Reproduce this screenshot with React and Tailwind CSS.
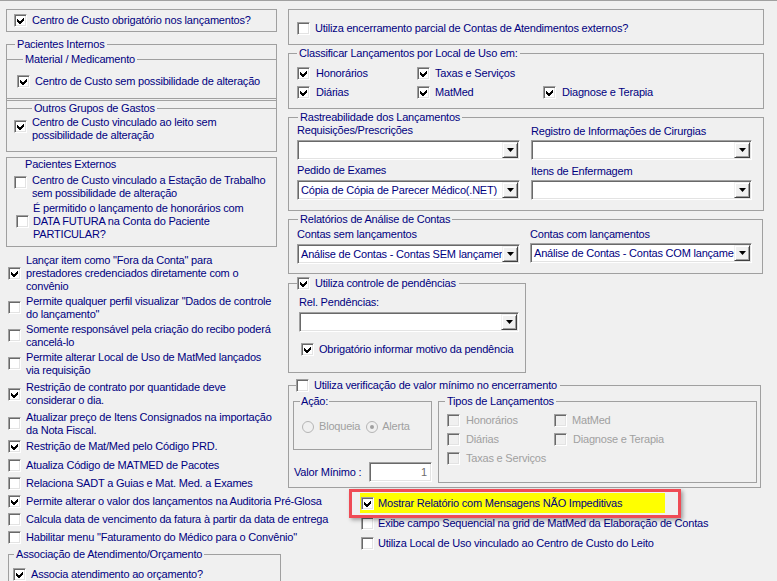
import React from 'react';

const T = 'text-[11px] leading-[13px] tracking-[-0.2px] whitespace-nowrap';
const NAVY = 'text-[#000080]';
const SUNKEN =
  'border border-t-[#a0a0a0] border-l-[#a0a0a0] border-b-white border-r-white shadow-[inset_1px_1px_0_#696969,inset_-1px_-1px_0_#e3e3e3]';

function Box({ checked, disabled }) {
  return (
    <span
      className={`flex items-center justify-center w-[13px] h-[13px] shrink-0 ${SUNKEN} ${
        disabled ? 'bg-[#f0f0f0]' : 'bg-white'
      }`}
    >
      {checked && (
        <svg width="7" height="7" viewBox="0 0 7 7" shapeRendering="crispEdges">
          <polygon points="0,2 2.5,4.5 7,0 7,3 2.5,7.5 0,5" fill={disabled ? '#a0a0a0' : '#000'} />
        </svg>
      )}
    </span>
  );
}

function Check({ checked, disabled, children, className = '', gap = 'gap-[5px]', align = 'items-center', box = '' }) {
  return (
    <div className={`flex shrink-0 ${align} ${gap} ${className}`}>
      <span className={box}>
        <Box checked={checked} disabled={disabled} />
      </span>
      <span className={`${T} ${disabled ? 'text-[#a0a0a0]' : NAVY}`}>{children}</span>
    </div>
  );
}

function Radio({ on }) {
  return (
    <svg width="12" height="12" viewBox="0 0 12 12" className="shrink-0">
      <circle cx="6" cy="6" r="5.5" fill="#f0f0f0" stroke="#b4b4b4" />
      {on && <circle cx="6" cy="6" r="2" fill="#a0a0a0" />}
    </svg>
  );
}

function Combo({ value, className = '' }) {
  return (
    <div className={`flex shrink-0 h-[20px] bg-white p-px ${SUNKEN} ${className}`}>
      <div className="flex-1 min-w-0 overflow-hidden flex items-center pl-[2px]">
        <span className={`${T} ${NAVY}`}>{value}</span>
      </div>
      <div className="w-[16px] shrink-0 flex items-center justify-center bg-[#f0f0f0] border border-t-[#f0f0f0] border-l-[#f0f0f0] border-b-[#404040] border-r-[#404040] shadow-[inset_1px_1px_0_#fff,inset_-1px_-1px_0_#a0a0a0]">
        <svg width="7" height="4" viewBox="0 0 7 4">
          <polygon points="0,0 7,0 3.5,4" fill="#000" />
        </svg>
      </div>
    </div>
  );
}

function Group({ title, className = '', legend = 'ml-[8px] px-[2px]', children }) {
  return (
    <fieldset className={`shrink-0 border border-[#a0a0a0] min-w-0 ${className}`}>
      <legend className={`${T} ${NAVY} ${legend}`}>{title}</legend>
      {children}
    </fieldset>
  );
}

const freeItems = [
  { h: 'h-[40px]', c: true, t: ['Lançar item como "Fora da Conta" para', 'prestadores credenciados diretamente com o', 'convênio'] },
  { h: 'h-[29px]', c: false, t: ['Permite qualquer perfil visualizar "Dados de controle', 'do lançamento"'] },
  { h: 'h-[27px]', c: false, t: ['Somente responsável pela criação do recibo poderá', 'cancelá-lo'] },
  { h: 'h-[29px]', c: false, t: ['Permite alterar Local de Uso de MatMed lançados', 'via requisição'] },
  { h: 'h-[32px]', c: true, t: ['Restrição de contrato por quantidade deve', 'considerar o dia.'] },
  { h: 'h-[27px]', c: false, t: ['Atualizar preço de Itens Consignados na importação', 'da Nota Fiscal.'] },
  { h: 'h-[19px]', c: true, t: ['Restrição de Mat/Med pelo Código PRD.'] },
  { h: 'h-[18px]', c: false, t: ['Atualiza Código de MATMED de Pacotes'] },
  { h: 'h-[18px]', c: false, t: ['Relaciona SADT a Guias e Mat. Med. a Exames'] },
  { h: 'h-[18px]', c: true, t: ['Permite alterar o valor dos lançamentos na Auditoria Pré-Glosa'] },
  { h: 'h-[18px]', c: false, t: ['Calcula data de vencimento da fatura à partir da data de entrega'] },
  { h: 'h-[18px]', c: false, t: ['Habilitar menu "Faturamento do Médico para o Convênio"'] },
];

function lines(arr) {
  return arr.map((l, i) => (
    <React.Fragment key={i}>
      {i > 0 && <br />}
      {l}
    </React.Fragment>
  ));
}

function LeftColumn() {
  return (
    <div className="w-[288px] shrink-0 flex flex-col">
      <div className="shrink-0 mt-[8px] ml-[6px] w-[271px] h-[23px] border border-[#a0a0a0] flex items-center pl-[7px]">
        <Check checked>Centro de Custo obrigatório nos lançamentos?</Check>
      </div>

      <Group title="Pacientes Internos" className="mt-[6px] ml-[6px] w-[271px]">
        <Group title="Material / Medicamento" className="mt-[2px] border-x-0" legend="ml-[16px] px-[2px]">
          <Check checked className="mt-[9px] pl-[10px] pb-[10px]">
            Centro de Custo sem possibilidade de alteração
          </Check>
        </Group>
        <div className="mt-px h-px bg-[#a0a0a0]" />
        <Group title="Outros Grupos de Gastos" className="mt-px border-x-0 border-b-0" legend="ml-[25px] px-[2px]">
          <Check checked align="items-start" box="mt-[4px]" className="mt-px pl-[7px] pb-[9px]">
            {lines(['Centro de Custo vinculado ao leito sem', 'possibilidade de alteração'])}
          </Check>
        </Group>
      </Group>

      <div className="shrink-0 mt-[5px] ml-[6px] w-[271px] border border-[#a0a0a0] pb-[5px]">
        <div className={`${T} ${NAVY} pl-[18px]`}>Pacientes Externos</div>
        <Check align="items-start" box="mt-[2px]" className="mt-[3px] pl-[7px]">
          {lines(['Centro de Custo vinculado a Estação de Trabalho', 'sem possibilidade de alteração'])}
        </Check>
        <Check gap="gap-[4px]" className="mt-[2px] pl-[9px]">
          {lines(['É permitido o lançamento de honorários com', 'DATA FUTURA na Conta do Paciente', 'PARTICULAR?'])}
        </Check>
      </div>

      <div className="shrink-0 mt-[6px] flex flex-col">
        {freeItems.map((it, i) => (
          <Check key={i} checked={it.c} className={`${it.h} pl-[8px]`}>
            {lines(it.t)}
          </Check>
        ))}
      </div>

      <Group title="Associação de Atendimento/Orçamento" className="mt-[2px] ml-[8px] w-[273px] h-[60px]" legend="ml-[5px] px-[2px]">
        <Check checked className="mt-[7px] pl-[4px]">
          Associa atendimento ao orçamento?
        </Check>
      </Group>
    </div>
  );
}

function RightColumn() {
  return (
    <div className="flex-1 flex flex-col">
      <div className="shrink-0 mt-[8px] w-[476px] h-[36px] border border-[#a0a0a0] pl-[8px] pt-[12px]">
        <Check>Utiliza encerramento parcial de Contas de Atendimentos externos?</Check>
      </div>

      <Group title="Classificar Lançamentos por Local de Uso em:" className="mt-[2px] w-[476px]">
        <div className="grid grid-cols-[120px_126px_1fr] gap-y-[6px] pl-[8px] mt-[7px] pb-[9px]">
          <Check checked gap="gap-[6px]">Honorários</Check>
          <Check checked gap="gap-[5px]">Taxas e Serviços</Check>
          <div />
          <Check checked gap="gap-[6px]">Diárias</Check>
          <Check checked gap="gap-[5px]">MatMed</Check>
          <Check checked gap="gap-[6px]">Diagnose e Terapia</Check>
        </div>
      </Group>

      <Group title="Rastreabilidade dos Lançamentos" className="mt-[2px] w-[476px]" legend="ml-[9px] px-[2px]">
        <div className="flex gap-[11px] pl-[8px] pb-[10px]">
          <div className="w-[223px] flex flex-col">
            <div className={`${T} ${NAVY}`}>Requisições/Prescrições</div>
            <Combo className="mt-[3px]" />
            <div className={`${T} ${NAVY} mt-[4px]`}>Pedido de Exames</div>
            <Combo className="mt-[3px]" value="Cópia de Cópia de Parecer Médico(.NET)" />
          </div>
          <div className="w-[221px] flex flex-col">
            <div className={`${T} ${NAVY} mt-px`}>Registro de Informações de Cirurgias</div>
            <Combo className="mt-[2px]" />
            <div className={`${T} ${NAVY} mt-[5px]`}>Itens de Enfermagem</div>
            <Combo className="mt-[2px]" />
          </div>
        </div>
      </Group>

      <Group title="Relatórios de Análise de Contas" className="mt-[2px] w-[475px]" legend="ml-[9px] px-[2px]">
        <div className="flex gap-[10px] pl-[8px] pb-[9px] mt-[2px]">
          <div className="w-[223px] flex flex-col">
            <div className={`${T} ${NAVY}`}>Contas sem lançamentos</div>
            <Combo className="mt-[3px]" value="Análise de Contas - Contas SEM lançamentos" />
          </div>
          <div className="w-[222px] flex flex-col">
            <div className={`${T} ${NAVY}`}>Contas com lançamentos</div>
            <Combo className="mt-[2px]" value="Análise de Contas - Contas COM lançamentos" />
          </div>
        </div>
      </Group>

      <fieldset className="shrink-0 mt-[3px] w-[238px] border border-[#a0a0a0] min-w-0">
        <legend className="ml-[8px] pr-[3px] flex items-center gap-[5px]">
          <Box checked />
          <span className={`${T} ${NAVY}`}>Utiliza controle de pendências</span>
        </legend>
        <div className={`${T} ${NAVY} mt-[6px] pl-[10px]`}>Rel. Pendências:</div>
        <Combo className="mt-[3px] ml-[10px] w-[220px]" />
        <Check checked className="mt-[11px] pl-[12px] pb-[16px]">
          Obrigatório informar motivo da pendência
        </Check>
      </fieldset>

      <fieldset className="shrink-0 mt-[6px] w-[473px] border border-[#a0a0a0] min-w-0">
        <legend className="ml-[7px] pr-[3px] flex items-center gap-[5px]">
          <Box />
          <span className={`${T} ${NAVY}`}>Utiliza verificação de valor mínimo no encerramento</span>
        </legend>
        <div className="flex items-start mt-[3px] pb-[4px]">
          <div className="flex flex-col ml-[4px]">
            <Group title="Ação:" className="w-[139px]" legend="ml-[6px] px-px">
              <div className="flex items-center mt-[12px] pl-[8px] pb-[16px]">
                <Radio />
                <span className={`${T} text-[#a0a0a0] ml-[5px]`}>Bloqueia</span>
                <span className="ml-[6px]">
                  <Radio on />
                </span>
                <span className={`${T} text-[#a0a0a0] ml-[4px]`}>Alerta</span>
              </div>
            </Group>
            <div className="flex items-center mt-[12px] ml-px">
              <span className={`${T} ${NAVY} w-[75px]`}>Valor Mínimo :</span>
              <div className={`w-[63px] h-[20px] bg-white flex items-center justify-end pr-[4px] ${SUNKEN}`}>
                <span className={`${T} text-[#6d6d6d]`}>1</span>
              </div>
            </div>
          </div>
          <Group title="Tipos de Lançamentos" className="ml-[6px] w-[319px]" legend="ml-[6px] px-[2px]">
            <div className="grid grid-cols-[107px_1fr] gap-y-[6px] pl-[8px] mt-[6px] pb-[17px]">
              <Check disabled gap="gap-[6px]">Honorários</Check>
              <Check disabled gap="gap-[5px]">MatMed</Check>
              <Check disabled gap="gap-[6px]">Diárias</Check>
              <Check disabled gap="gap-[6px]">Diagnose e Terapia</Check>
              <Check disabled gap="gap-[6px]">Taxas e Serviços</Check>
            </div>
          </Group>
        </div>
      </fieldset>

      <div className="shrink-0 mt-[5px] ml-[72px] flex flex-col">
        <Check checked gap="gap-[4px]" className="w-[305px] h-[20px] bg-[#ffff00] pl-px">
          Mostrar Relatório com Mensagens NÃO Impeditivas
        </Check>
        <Check gap="gap-[4px]" className="h-[20px] pl-px">
          Exibe campo Sequencial na grid de MatMed da Elaboração de Contas
        </Check>
        <Check gap="gap-[4px]" className="h-[20px] pl-px">
          Utiliza Local de Uso vinculado ao Centro de Custo do Leito
        </Check>
      </div>
    </div>
  );
}

export default function App() {
  return (
    <div className="relative w-[777px] h-[581px] overflow-hidden bg-[#f0f0f0] border-t border-[#a0a0a0] flex font-['Liberation_Sans',Arial,sans-serif]">
      <LeftColumn />
      <RightColumn />
      {/* destaque vermelho sobre a opção */}
      <div className="absolute left-[349px] top-[488px] w-[332px] h-[29px] border-[3px] border-[#ef4b55] shadow-[2px_2px_4px_rgba(0,0,0,0.35)] pointer-events-none" />
    </div>
  );
}
